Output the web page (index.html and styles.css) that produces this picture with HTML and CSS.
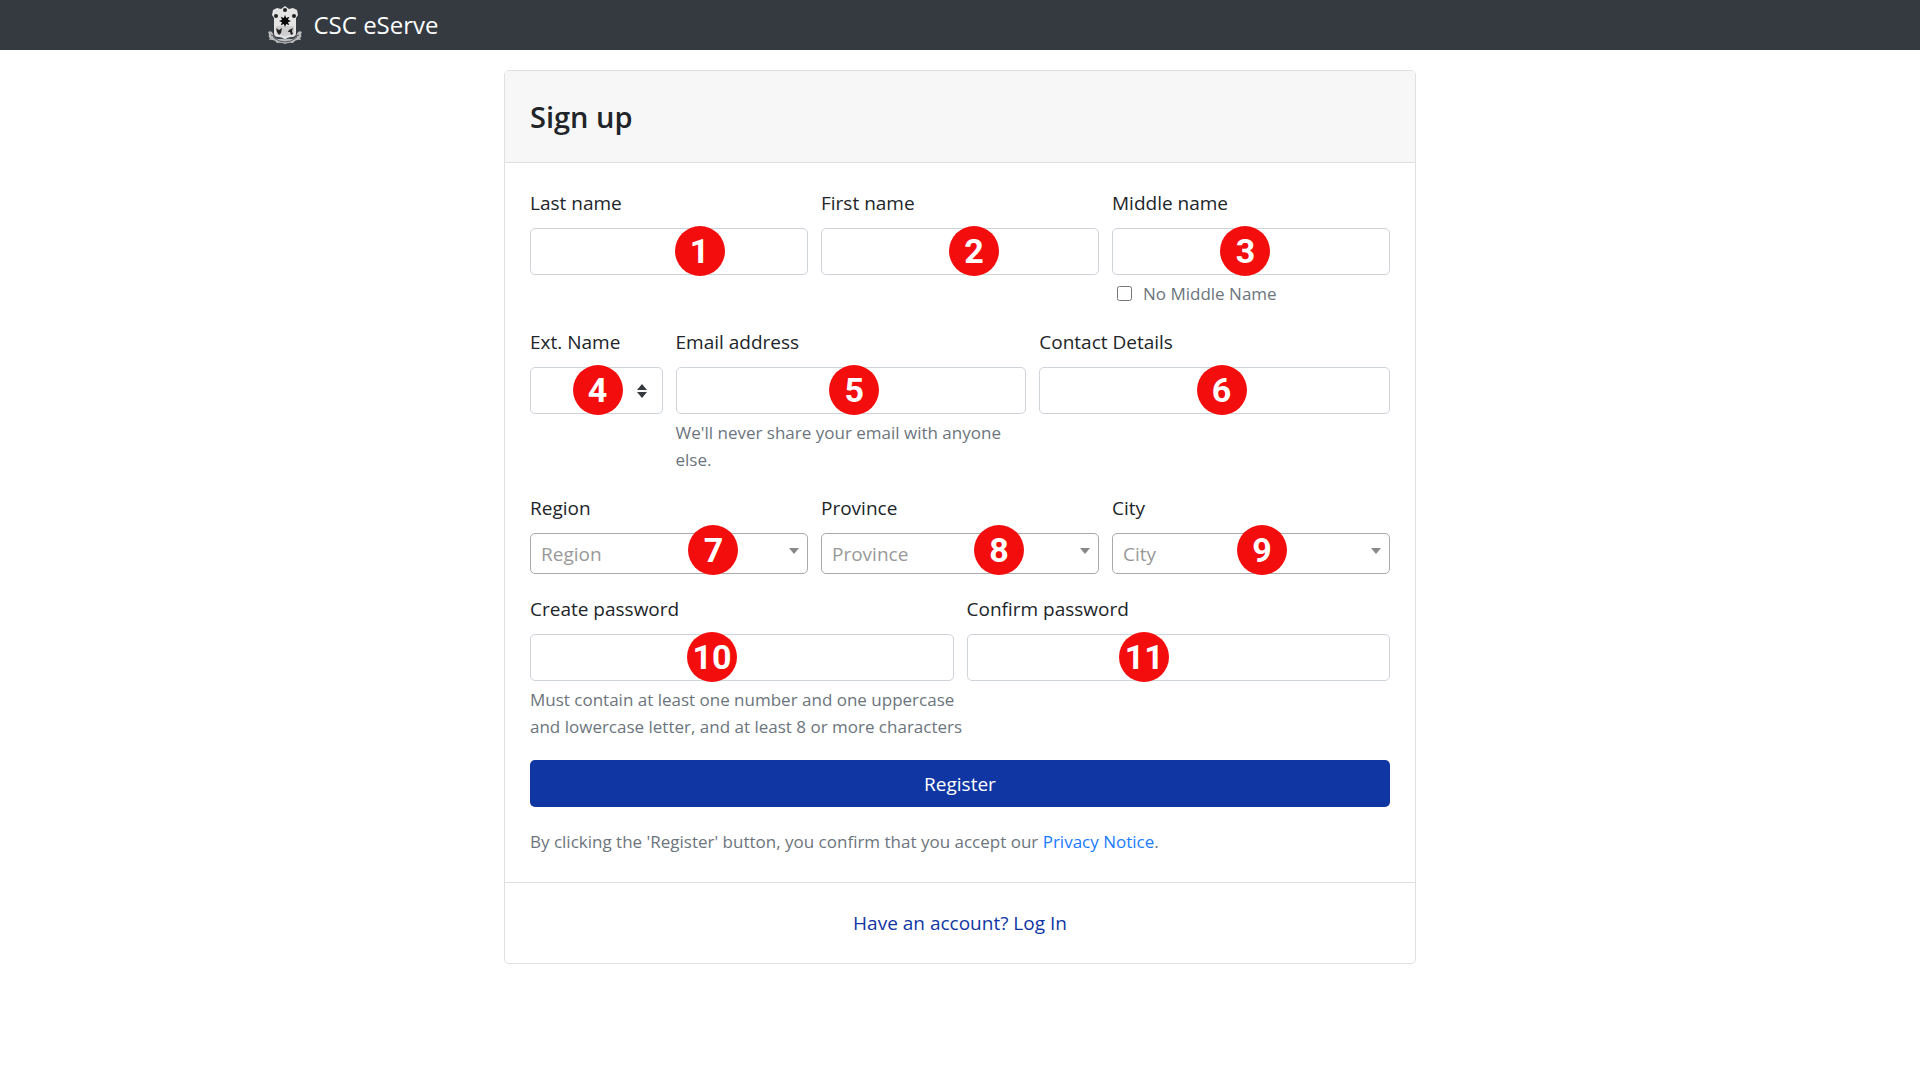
FILE: index.html
```html
<!DOCTYPE html>
<html lang="en">
<head>
  <meta charset="utf-8">
  <meta name="viewport" content="width=device-width, initial-scale=1">
  <title>Sign up - CSC eServe</title>
  <link rel="stylesheet" href="styles.css">
</head>
<body>
  <header class="navbar">
    <div class="navbar-inner">
      <a class="brand" href="#">
        <svg class="brand-logo" viewBox="0 0 38 38" aria-hidden="true">
          <path d="M2 26q4-2 5 2q1 5 6 5q4-1 6 1q2-2 6-1q5 0 6-5q1-4 5-2l-1 2q1 3-1 4l1 2q-5-1-8 3q-4-1-8 1q-4-2-8-1q-3-4-8-3l1-2q-2-1-1-4z" fill="#b9bbbd"/>
          <path d="M5 29q3 0 3 3q5 4 11 4q6 0 11-4q0-3 3-3" fill="none" stroke="#55595d" stroke-width="1"/>
          <path d="M7 4l4-2l4 1l4-3l4 3l4-1l4 2l1 5l-2 3v15q0 4-4 4q-5 0-7 3q-2-3-7-3q-4 0-4-4V12L6 9z" fill="#e4e4e4"/>
          <path d="M10 20h18v6q0 3-3 3q-4 0-6 2q-2-2-6-2q-3 0-3-3z" fill="#cdcdcd"/>
          <path d="M19 9l1.200 3l3-1.200l-1.200 3l3 1.200l-3 1.200l1.200 3l-3-1.200L19 21l-1.200-3l-3 1.200l1.200-3l-3-1.200l3-1.200l-1.200-3l3 1.200z" fill="#080808"/>
          <circle cx="19" cy="4" r="2" fill="#222"/>
          <circle cx="10" cy="10" r="2" fill="#222"/>
          <circle cx="28" cy="10" r="2" fill="#222"/>
          <path d="M10 22l3 2l3-2l-1 5l-2 2l-2-3z" fill="#222"/>
          <path d="M27 22l-4 2l-1 2l2 0l1 3l2-1l-1-3z" fill="#222"/>
        </svg>
        <span>CSC eServe</span>
      </a>
    </div>
  </header>

  <main class="card">
    <div class="card-header">
      <h1 class="card-title">Sign up</h1>
    </div>

    <form class="card-body">
      <div class="row">
        <div class="field span-4">
          <label for="last-name">Last name</label>
          <div class="control"><input class="input" id="last-name" type="text"><span class="marker marker-1">1</span></div>
        </div>
        <div class="field span-4">
          <label for="first-name">First name</label>
          <div class="control"><input class="input" id="first-name" type="text"><span class="marker marker-2">2</span></div>
        </div>
        <div class="field span-4">
          <label for="middle-name">Middle name</label>
          <div class="control"><input class="input" id="middle-name" type="text"><span class="marker marker-3">3</span></div>
          <div class="help check">
            <input class="checkbox" id="no-middle" type="checkbox">
            <label class="check-label" for="no-middle">No Middle Name</label>
          </div>
        </div>
      </div>

      <div class="row">
        <div class="field span-2">
          <label for="ext-name">Ext. Name</label>
          <div class="control">
            <select class="input" id="ext-name"><option></option></select>
            <svg class="sort-icon" viewBox="0 0 12 14" aria-hidden="true"><path d="M6 0L1 6h10zM6 14L1 8h10z" fill="#343a40"/></svg>
            <span class="marker marker-4">4</span>
          </div>
        </div>
        <div class="field span-5">
          <label for="email">Email address</label>
          <div class="control"><input class="input" id="email" type="email"><span class="marker marker-5">5</span></div>
          <p class="help">We'll never share your email with anyone else.</p>
        </div>
        <div class="field span-5">
          <label for="contact">Contact Details</label>
          <div class="control"><input class="input" id="contact" type="text"><span class="marker marker-6">6</span></div>
        </div>
      </div>

      <div class="row">
        <div class="field span-4">
          <label for="region">Region</label>
          <div class="control">
            <select class="picker" id="region"><option>Region</option></select>
            <span class="caret"></span><span class="marker marker-7">7</span>
          </div>
        </div>
        <div class="field span-4">
          <label for="province">Province</label>
          <div class="control">
            <select class="picker" id="province"><option>Province</option></select>
            <span class="caret"></span><span class="marker marker-8">8</span>
          </div>
        </div>
        <div class="field span-4">
          <label for="city">City</label>
          <div class="control">
            <select class="picker" id="city"><option>City</option></select>
            <span class="caret"></span><span class="marker marker-9">9</span>
          </div>
        </div>
      </div>

      <div class="row">
        <div class="field span-6">
          <label for="password">Create password</label>
          <div class="control"><input class="input" id="password" type="password"><span class="marker marker-10">10</span></div>
          <p class="help help-wide">Must contain at least one number and one uppercase<br>and lowercase letter, and at least 8 or more characters</p>
        </div>
        <div class="field span-6">
          <label for="confirm">Confirm password</label>
          <div class="control"><input class="input" id="confirm" type="password"><span class="marker marker-11">11</span></div>
        </div>
      </div>

      <button class="submit" type="submit">Register</button>
      <p class="terms">By clicking the 'Register' button, you confirm that you accept our <a href="#">Privacy Notice</a>.</p>
    </form>

    <div class="card-footer"><a href="#">Have an account? Log In</a></div>
  </main>
</body>
</html>
```
FILE: styles.css
```css
* {
  box-sizing: border-box;
}

body {
  margin: 0;
  background: #fff;
  color: #212529;
  font-family: "Open Sans", "Noto Sans", sans-serif;
  font-size: 19px;
  line-height: 30px;
}

a {
  text-decoration: none;
}

.navbar {
  background: #343a40;
}

.navbar-inner {
  display: flex;
  max-width: 1425px;
  margin: 0 auto;
  padding: 6px 18px;
}

.brand {
  display: flex;
  align-items: center;
  gap: 10px;
  color: #fff;
  font-size: 24px;
  line-height: 38px;
}

.brand-logo {
  width: 38px;
  height: 38px;
}

.card {
  max-width: 912px;
  margin: 20px auto;
  border: 1px solid #dfdfdf;
  border-radius: 5px;
}

.card-header {
  padding: 27px 25px;
  background: #f7f7f7;
  border-bottom: 1px solid #dfdfdf;
}

.card-title {
  margin: 0;
  font-size: 29px;
  font-weight: 600;
  line-height: 37px;
}

.card-body {
  display: flex;
  flex-direction: column;
  gap: 20px;
  padding: 25px;
}

.row {
  display: grid;
  grid-template-columns: repeat(12, minmax(0, 1fr));
  column-gap: 13px;
}

.span-2 { grid-column: span 2; }
.span-4 { grid-column: span 4; }
.span-5 { grid-column: span 5; }
.span-6 { grid-column: span 6; }

.field > label {
  display: block;
  margin-bottom: 10px;
  white-space: nowrap;
}

.control {
  position: relative;
}

.input,
.picker {
  display: block;
  width: 100%;
  height: 47px;
  margin: 0;
  padding: 0 14px;
  appearance: none;
  background: #fff;
  border: 1px solid #ced4da;
  border-radius: 5px;
  color: #495057;
  font: inherit;
}

.picker {
  height: 41px;
  padding: 0 10px;
  border-color: #aaa;
  color: #999;
}

.sort-icon {
  position: absolute;
  top: 50%;
  right: 15px;
  width: 12px;
  height: 14px;
  margin-top: -7px;
}

.caret {
  position: absolute;
  top: 15px;
  right: 9px;
  border: 5px solid transparent;
  border-top: 6px solid #888;
  border-bottom: 0;
}

.help {
  margin: 5px 0 0;
  color: #6c757d;
  font-size: 17px;
  line-height: 27px;
}

.help-wide {
  margin-right: -13px;
}

.check {
  display: flex;
  align-items: center;
  gap: 11px;
  padding-left: 5px;
}

.checkbox {
  width: 15px;
  height: 15px;
  margin: 0;
}

.marker {
  position: absolute;
  bottom: -1px;
  width: 50px;
  height: 50px;
  margin-left: -25px;
  background: #f40d0d;
  border-radius: 50%;
  color: #fff;
  font-family: Roboto, "Liberation Sans", sans-serif;
  font-size: 34px;
  font-weight: 700;
  line-height: 50px;
  text-align: center;
  pointer-events: none;
}

.marker-1 { left: 61%; }
.marker-2 { left: 55%; }
.marker-3 { left: 48%; }
.marker-4 { left: 51%; }
.marker-5 { left: 51%; }
.marker-6 { left: 52%; }
.marker-7 { left: 66%; }
.marker-8 { left: 64%; }
.marker-9 { left: 54%; }
.marker-10 { left: 43%; }
.marker-11 { left: 42%; }

.submit {
  height: 47px;
  padding: 0;
  background: #1036a3;
  border: 0;
  border-radius: 5px;
  color: #fff;
  font: inherit;
}

.terms {
  margin: 0;
  color: #6c757d;
  font-size: 17px;
}

.terms a {
  color: #1a7bff;
}

.card-footer {
  padding: 25px;
  border-top: 1px solid #dfdfdf;
  text-align: center;
}

.card-footer a {
  color: #1036a3;
}
```
